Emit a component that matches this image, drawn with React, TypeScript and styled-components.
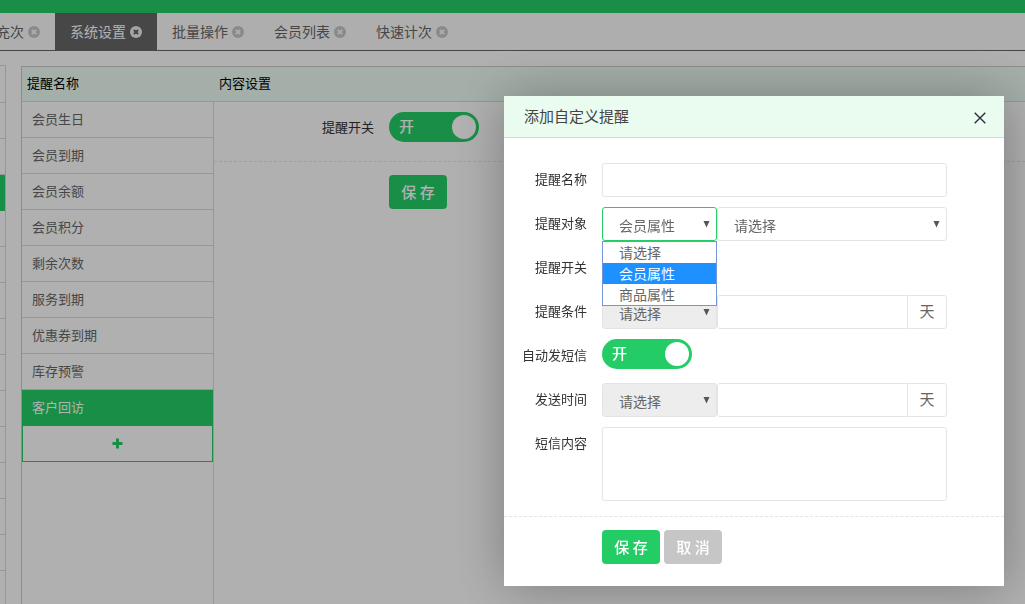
import React, { useState } from 'react';
import styled, { createGlobalStyle, css } from 'styled-components';

const GlobalStyle = createGlobalStyle`
  * { box-sizing: border-box; }
  body {
    margin: 0;
    background: #fcfcfc;
    color: #333;
    font-family: "Noto Sans CJK SC", sans-serif;
    font-size: 13px;
    line-height: 20px;
  }
  button, input, select, textarea { font-family: inherit; margin: 0; }
  ul { list-style: none; margin: 0; padding: 0; }
`;

const green = '#24cc66';
const line = '#e4e4e4';

const Page = styled.div`
  display: flex;
  flex-direction: column;
  height: 100vh;
  overflow: hidden;
`;

const TopBar = styled.header`
  flex: none;
  height: 13px;
  background: ${green};
`;

const Tabs = styled.nav`
  flex: none;
  display: flex;
  height: 38px;
  background: #fafafa;
  border-bottom: 1px solid #666;
`;

const Tab = styled.div<{ $active?: boolean; $cut?: boolean }>`
  display: flex;
  align-items: center;
  gap: 4px;
  padding: 0 15px;
  margin-left: ${p => (p.$cut ? '-19px' : '0')};
  background: ${p => (p.$active ? '#666' : 'transparent')};
  color: ${p => (p.$active ? '#fff' : '#666')};
`;

const TabLink = styled.a`
  padding-bottom: 2px;
  color: inherit;
  font-size: 14px;
  text-decoration: none;
  white-space: nowrap;
`;

const IconButton = styled.button`
  display: flex;
  padding: 0;
  border: 0;
  background: none;
  cursor: pointer;
`;

const Body = styled.div`
  flex: 1;
  display: flex;
  min-height: 0;
`;

const Rail = styled.aside`
  flex: none;
  width: 6px;
  padding-top: 14px;
`;

const RailList = styled.ul`
  height: 100%;
  border-top: 1px solid #d8d8d8;
  border-right: 1px solid #d8d8d8;
`;

const RailItem = styled.li<{ $active?: boolean }>`
  height: 36px;
  border-bottom: 1px solid ${p => (p.$active ? green : '#d8d8d8')};
  background: ${p => (p.$active ? green : 'transparent')};
  &:first-child { height: 37px; }
`;

const Main = styled.main`
  flex: 1;
  display: flex;
  min-width: 0;
  padding: 15px 0 0 15px;
`;

const Panel = styled.section`
  flex: 1;
  display: grid;
  grid-template-columns: 192px 1fr;
  grid-template-rows: 35px 1fr;
  border-top: 1px solid #cacaca;
  border-left: 1px solid #cacaca;
`;

const PanelHead = styled.div`
  display: flex;
  align-items: center;
  padding: 0 0 2px 5px;
  background: #ecfbf2;
  border-bottom: 1px solid #d8d8d8;
  color: #000;
`;

const Menu = styled.ul`
  border-right: 1px solid #d8d8d8;
`;

const MenuItem = styled.li<{ $active?: boolean }>`
  height: 36px;
  padding-left: 10px;
  border-bottom: 1px solid ${p => (p.$active ? green : '#d8d8d8')};
  background: ${p => (p.$active ? green : 'transparent')};
  color: ${p => (p.$active ? '#fff' : '#666')};
`;

const MenuLink = styled.a`
  display: block;
  line-height: 33px;
  color: inherit;
  text-decoration: none;
`;

const AddButton = styled.button`
  display: flex;
  align-items: center;
  justify-content: center;
  width: 100%;
  height: 36px;
  padding: 0;
  border: 1px solid ${green};
  border-top: 0;
  background: none;
`;

const SettingRow = styled.div`
  display: flex;
  align-items: center;
  gap: 15px;
  height: 60px;
  padding-bottom: 9px;
  border-bottom: 1px dashed #e4e4e4;
`;

const SettingLabel = styled.label`
  width: 160px;
  text-align: right;
`;

const SettingActions = styled.div`
  padding: 13px 0 0 175px;
`;

const Button = styled.button<{ $muted?: boolean }>`
  width: 58px;
  height: 34px;
  padding: 0 0 2px;
  border: 0;
  border-radius: 4px;
  background: ${p => (p.$muted ? '#c6c6c6' : green)};
  color: #fff;
  font-size: 15px;
  font-weight: 500;
  cursor: pointer;
`;

const SwitchBox = styled.span`
  position: relative;
  display: block;
  width: 90px;
  height: 30px;
`;

const SwitchInput = styled.input`
  position: absolute;
  inset: 0;
  width: 100%;
  height: 100%;
  opacity: 0;
  cursor: pointer;
`;

const SwitchTrack = styled.span<{ $on: boolean }>`
  display: flex;
  flex-direction: ${p => (p.$on ? 'row' : 'row-reverse')};
  align-items: center;
  justify-content: space-between;
  height: 30px;
  padding: ${p => (p.$on ? '0 3px 0 10px' : '0 10px 0 3px')};
  border-radius: 15px;
  background: ${p => (p.$on ? green : '#c6c6c6')};
  color: #fff;
  font-size: 15px;
  font-weight: 500;
`;

const SwitchText = styled.span`
  padding-bottom: 2px;
`;

const Knob = styled.span`
  width: 24px;
  height: 24px;
  border-radius: 50%;
  background: #fff;
`;

const Overlay = styled.div`
  position: fixed;
  inset: 0;
  display: flex;
  align-items: flex-start;
  justify-content: flex-end;
  padding: 96px 21px 0;
  background: rgba(0, 0, 0, 0.3);
`;

const Dialog = styled.div`
  width: 500px;
  background: #fff;
  box-shadow: 1px 1px 50px rgba(0, 0, 0, 0.3);
`;

const DialogHead = styled.div`
  display: flex;
  align-items: center;
  justify-content: space-between;
  height: 42px;
  padding: 2px 18px 0 20px;
  border-bottom: 1px solid #c2e6d0;
  background: #eafbf0;
`;

const DialogTitle = styled.h2`
  margin: 0;
  padding-bottom: 4px;
  color: #444;
  font-size: 15px;
  font-weight: 400;
`;

const Form = styled.form`
  margin: 0;
`;

const Fields = styled.div`
  display: flex;
  flex-direction: column;
  gap: 10px;
  padding: 25px 57px 15px 0;
`;

const Field = styled.div`
  display: grid;
  grid-template-columns: 83px 1fr;
  column-gap: 15px;
  min-height: 34px;
`;

const FieldLabel = styled.label`
  line-height: 31px;
  text-align: right;
`;

const Group = styled.div`
  position: relative;
  display: flex;
`;

const box = css`
  border: 1px solid ${line};
  border-radius: 3px;
  background: #fff;
  color: #666;
  font-size: 14px;
  outline: 0;
`;

const TextInput = styled.input<{ $joined?: boolean }>`
  ${box}
  flex: 1;
  min-width: 0;
  height: 34px;
  padding: 0 10px;
  ${p => p.$joined && 'border-radius: 3px 0 0 3px;'}
`;

const TextArea = styled.textarea`
  ${box}
  display: block;
  width: 100%;
  height: 74px;
  padding: 6px 10px;
  resize: none;
`;

const SelectBox = styled.span<{ $wide?: boolean }>`
  position: relative;
  display: block;
  flex: ${p => (p.$wide ? '1' : '0 0 115px')};
`;

const Select = styled.select<{ $open?: boolean }>`
  ${box}
  appearance: none;
  width: 100%;
  height: 34px;
  padding: 2px 20px 0 16px;
  ${p => p.$open && `border-color: ${green};`}
  &:disabled { background: #ededed; opacity: 1; }
`;

const Arrow = styled.svg`
  position: absolute;
  top: 14px;
  right: 7px;
  pointer-events: none;
`;

const Addon = styled.span`
  ${box}
  display: flex;
  align-items: center;
  justify-content: center;
  width: 40px;
  height: 34px;
  margin-left: -1px;
  padding-bottom: 2px;
  border-radius: 0 3px 3px 0;
  font-size: 15px;
`;

const Popup = styled.ul`
  position: absolute;
  z-index: 1;
  top: 34px;
  left: 0;
  width: 115px;
  border: 1px solid #7397d6;
  background: #fff;
`;

const PopupItem = styled.li<{ $active: boolean }>`
  padding-left: 16px;
  background: ${p => (p.$active ? '#1e90ff' : '#fff')};
  color: ${p => (p.$active ? '#fff' : '#666')};
  font-size: 14px;
  line-height: 21px;
`;

const DialogActions = styled.div`
  display: flex;
  gap: 4px;
  padding: 13px 0 22px 98px;
  border-top: 1px dashed ${line};
`;

const TabCloseIcon = ({ active }: { active?: boolean }) => (
  <svg width="12" height="12" viewBox="0 0 12 12" aria-hidden="true">
    <circle cx="6" cy="6" r="6" fill={active ? '#ececec' : '#c6c6c6'} />
    <path d="M3.8 3.8l4.4 4.4M8.2 3.8l-4.4 4.4" stroke={active ? '#555' : '#fafafa'} strokeWidth="1.7" />
  </svg>
);

const DialogCloseIcon = () => (
  <svg width="12" height="12" viewBox="0 0 12 12" aria-hidden="true">
    <path d="M0.7 0.7l10.6 10.6M11.3 0.7L0.7 11.3" stroke="#2e2d3c" strokeWidth="1.4" />
  </svg>
);

const PlusIcon = () => (
  <svg width="11" height="11" viewBox="0 0 11 11" aria-hidden="true">
    <path d="M5.5 0.5v10M0.5 5.5h10" stroke={green} strokeWidth="3" />
  </svg>
);

const ArrowIcon = () => (
  <Arrow width="7" height="7" viewBox="0 0 7 7" aria-hidden="true">
    <path d="M0.5 0h6L3.5 6.5z" fill="#555" />
  </Arrow>
);

const Switch = ({ id }: { id: string }) => {
  const [on, setOn] = useState(true);
  return (
    <SwitchBox>
      <SwitchTrack $on={on}>
        <SwitchText>{on ? '开' : '关'}</SwitchText>
        <Knob />
      </SwitchTrack>
      <SwitchInput id={id} type="checkbox" role="switch" checked={on} onChange={e => setOn(e.target.checked)} />
    </SwitchBox>
  );
};

const tabs = ['充次', '系统设置', '批量操作', '会员列表', '快速计次'];
const reminders = ['会员生日', '会员到期', '会员余额', '会员积分', '剩余次数', '服务到期', '优惠券到期', '库存预警', '客户回访'];
const targets = ['请选择', '会员属性', '商品属性'];
const railItems = Array.from({ length: 14 }, (_, i) => i);

const DaysField = ({ id, label }: { id: string; label: string }) => (
  <Field>
    <FieldLabel htmlFor={id}>{label}</FieldLabel>
    <Group>
      <SelectBox>
        <Select id={id} disabled>
          <option>请选择</option>
        </Select>
        <ArrowIcon />
      </SelectBox>
      <TextInput $joined aria-label={`${label}天数`} />
      <Addon>天</Addon>
    </Group>
  </Field>
);

const AddReminderDialog = () => {
  const [target, setTarget] = useState('会员属性');
  const [open, setOpen] = useState(true);
  return (
    <Overlay>
      <Dialog role="dialog" aria-labelledby="dialog-title">
        <DialogHead>
          <DialogTitle id="dialog-title">添加自定义提醒</DialogTitle>
          <IconButton type="button" aria-label="关闭">
            <DialogCloseIcon />
          </IconButton>
        </DialogHead>
        <Form onSubmit={e => e.preventDefault()}>
          <Fields>
            <Field>
              <FieldLabel htmlFor="name">提醒名称</FieldLabel>
              <Group>
                <TextInput id="name" />
              </Group>
            </Field>
            <Field>
              <FieldLabel htmlFor="target">提醒对象</FieldLabel>
              <Group>
                <SelectBox>
                  <Select id="target" $open={open} value={target} onChange={e => setTarget(e.target.value)}>
                    {targets.map(t => (
                      <option key={t}>{t}</option>
                    ))}
                  </Select>
                  <ArrowIcon />
                </SelectBox>
                <SelectBox $wide>
                  <Select aria-label="属性">
                    <option>请选择</option>
                  </Select>
                  <ArrowIcon />
                </SelectBox>
                {open && (
                  <Popup role="listbox">
                    {targets.map(t => (
                      <PopupItem
                        key={t}
                        role="option"
                        aria-selected={t === target}
                        $active={t === target}
                        onClick={() => {
                          setTarget(t);
                          setOpen(false);
                        }}
                      >
                        {t}
                      </PopupItem>
                    ))}
                  </Popup>
                )}
              </Group>
            </Field>
            <Field>
              <FieldLabel htmlFor="enabled">提醒开关</FieldLabel>
              {/* the open list covers the switch, so it is shown once the list closes */}
              {!open && <Switch id="enabled" />}
            </Field>
            <DaysField id="condition" label="提醒条件" />
            <Field>
              <FieldLabel htmlFor="auto-sms">自动发短信</FieldLabel>
              <Switch id="auto-sms" />
            </Field>
            <DaysField id="send-time" label="发送时间" />
            <Field>
              <FieldLabel htmlFor="content">短信内容</FieldLabel>
              <TextArea id="content" />
            </Field>
          </Fields>
          <DialogActions>
            <Button type="submit">保 存</Button>
            <Button type="button" $muted>取 消</Button>
          </DialogActions>
        </Form>
      </Dialog>
    </Overlay>
  );
};

export default function App() {
  return (
    <>
      <GlobalStyle />
      <Page>
        <TopBar />
        <Tabs>
          {tabs.map((t, i) => (
            <Tab key={t} $active={i === 1} $cut={i === 0}>
              <TabLink href="#">{t}</TabLink>
              <IconButton type="button" aria-label={`关闭${t}`}>
                <TabCloseIcon active={i === 1} />
              </IconButton>
            </Tab>
          ))}
        </Tabs>
        <Body>
          <Rail>
            <RailList>
              {railItems.map(i => (
                <RailItem key={i} $active={i === 3} />
              ))}
            </RailList>
          </Rail>
          <Main>
            <Panel>
              <PanelHead>提醒名称</PanelHead>
              <PanelHead>内容设置</PanelHead>
              <Menu>
                {reminders.map(r => (
                  <MenuItem key={r} $active={r === '客户回访'}>
                    <MenuLink href="#">{r}</MenuLink>
                  </MenuItem>
                ))}
                <li>
                  <AddButton type="button" aria-label="添加提醒">
                    <PlusIcon />
                  </AddButton>
                </li>
              </Menu>
              <div>
                <SettingRow>
                  <SettingLabel htmlFor="reminder-enabled">提醒开关</SettingLabel>
                  <Switch id="reminder-enabled" />
                </SettingRow>
                <SettingActions>
                  <Button type="button">保 存</Button>
                </SettingActions>
              </div>
            </Panel>
          </Main>
        </Body>
      </Page>
      <AddReminderDialog />
    </>
  );
}
